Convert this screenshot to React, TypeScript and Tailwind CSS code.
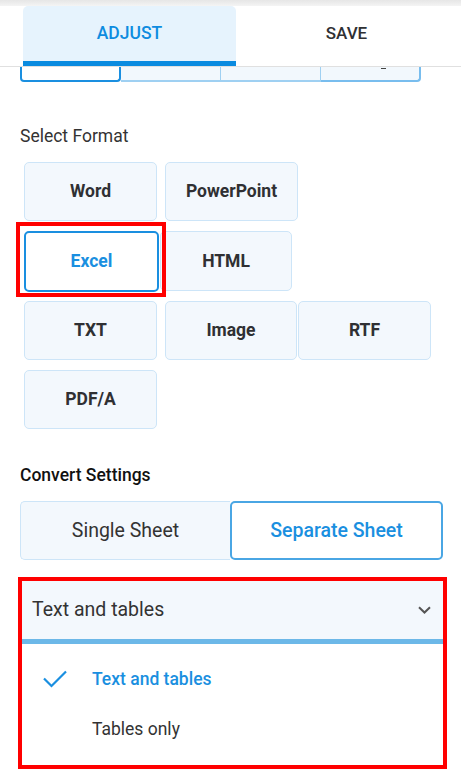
import React from "react";

const btn =
  "flex items-center justify-center rounded-[5px] border border-[#cde5f8] bg-[#f3f8fd] text-[17.5px] font-bold text-[#2f3033]";

export default function App() {
  return (
    <div
      className="relative h-[774px] w-[461px] overflow-hidden bg-white"
      style={{ fontFamily: "Roboto, 'Noto Sans', sans-serif" }}
    >
      {/* top gray strip */}
      <div className="h-[6px] bg-gradient-to-b from-[#e6e6e6] to-[#f4f4f4]" />
      {/* tabs */}
      <div className="flex h-[61px] border-b border-[#e0e0e0]">
        <div className="ml-[23px] flex w-[213px] flex-col rounded-t-[5px] bg-[#e6f3fd]">
          <div className="flex flex-1 items-center justify-center text-[17.5px] font-medium text-[#0e8ce0]">
            ADJUST
          </div>
          <div className="h-[5px] bg-[#0a8be0]" />
        </div>
        <div className="flex flex-1 items-center justify-center pb-[5px] pr-[4px] text-[17px] font-medium text-[#2f3033]">
          SAVE
        </div>
      </div>
      {/* cut-off segmented control */}
      <div className="ml-[20px] flex h-[15px] w-[401px]">
        <div className="w-[101px] rounded-b-[4px] border-x-2 border-b-2 border-[#1a8fe0] bg-white" />
        <div className="w-[100px] border-b-2 border-r border-[#9fd0f2] bg-[#f2f8fd]" />
        <div className="w-[100px] border-b-2 border-r border-[#9fd0f2] bg-[#f2f8fd]" />
        <div className="relative w-[100px] rounded-br-[4px] border-b-2 border-r-2 border-[#78bdee] bg-[#f2f8fd]">
          <div className="absolute left-[60px] top-[1px] h-[1px] w-[5px] bg-[#444]" />
        </div>
      </div>

      <div className="mt-[42px] pl-[20px] text-[17.5px] leading-[24px] text-[#333]">
        Select Format
      </div>

      <div className="mt-[14px] flex pl-[24px]">
        <div className={`${btn} h-[59px] w-[133px]`}>Word</div>
        <div className={`${btn} ml-[8px] h-[59px] w-[133px]`}>PowerPoint</div>
      </div>
      <div className="mt-[10px] flex pl-[24px]">
        <div className="relative h-[61px] w-[135px]">
          <div className="absolute -left-[8px] -top-[9px] h-[75px] w-[150px] border-[4px] border-[#ff0000]" />
          <div className="relative flex h-full w-full items-center justify-center rounded-[5px] border-2 border-[#1a8fe0] bg-white text-[17.5px] font-bold text-[#1a8fe0]">
            Excel
          </div>
        </div>
        <div className={`${btn} ml-[1px] h-[60px] w-[132px]`}>HTML</div>
      </div>
      <div className="mt-[9px] flex pl-[24px]">
        <div className={`${btn} h-[59px] w-[133px]`}>TXT</div>
        <div className={`${btn} ml-[8px] h-[59px] w-[132px]`}>Image</div>
        <div className={`${btn} ml-[1px] h-[59px] w-[133px]`}>RTF</div>
      </div>
      <div className="mt-[10px] flex pl-[24px]">
        <div className={`${btn} h-[59px] w-[133px]`}>PDF/A</div>
      </div>

      <div className="mt-[34px] pl-[20px] text-[17.5px] font-medium leading-[24px] text-[#111]">
        Convert Settings
      </div>

      <div className="ml-[20px] mt-[14px] flex h-[59px] w-[423px]">
        <div className="flex flex-1 items-center justify-center rounded-l-[5px] border border-r-0 border-[#cde5f8] bg-[#f3f8fd] text-[19.5px] text-[#333]">
          Single Sheet
        </div>
        <div className="flex flex-1 items-center justify-center rounded-[5px] border-2 border-[#4aa6e4] bg-white text-[19.5px] font-medium text-[#1a8fe0]">
          Separate Sheet
        </div>
      </div>

      <div className="ml-[18px] mt-[17px] w-[429px] border-[4px] border-[#ff0000]">
        <div className="flex h-[58px] items-center justify-between bg-[#f3f8fd] pl-[10px] pr-[12px] text-[19.5px] text-[#333]">
          <span>Text and tables</span>
          <svg width="13" height="8" viewBox="0 0 13 8" fill="none">
            <path d="M1 1.2 L6.5 6.5 L12 1.2" stroke="#555" strokeWidth="2" />
          </svg>
        </div>
        <div className="h-[5px] bg-[#6cb8e8]" />
        <div className="pb-[11px] pt-[10px]">
          <div className="flex h-[50px] items-center">
            <svg className="ml-[21px]" width="24" height="18" viewBox="0 0 24 18" fill="none">
              <path d="M1 8.5 L8.5 16 L23 1.5" stroke="#1a8fe0" strokeWidth="2.2" />
            </svg>
            <span className="ml-[25px] text-[17.5px] font-medium text-[#1a8fe0]">Text and tables</span>
          </div>
          <div className="flex h-[50px] items-center">
            <span className="ml-[70px] text-[17.5px] text-[#333]">Tables only</span>
          </div>
        </div>
      </div>
    </div>
  );
}
